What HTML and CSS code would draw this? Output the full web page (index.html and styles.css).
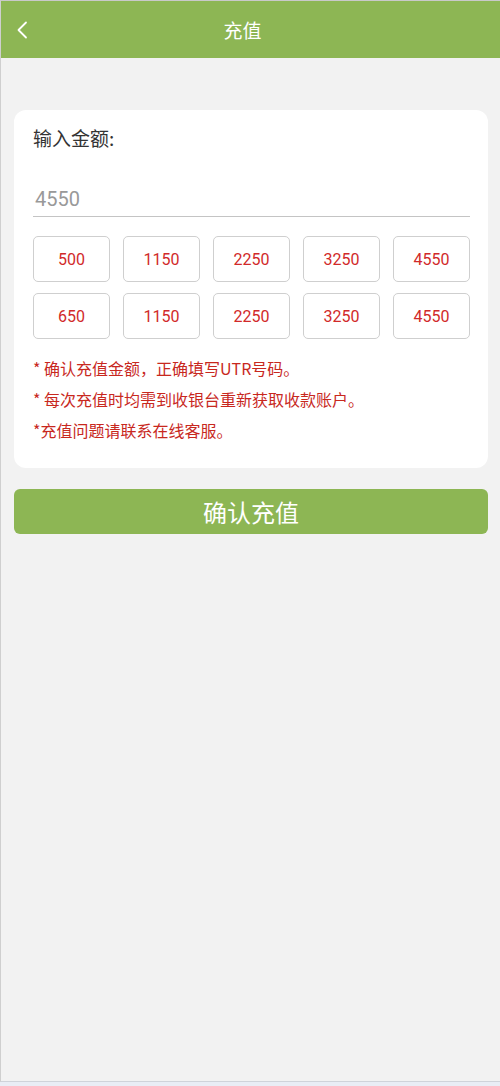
FILE: index.html
```html
<!DOCTYPE html>
<html lang="zh">
<head>
<meta charset="utf-8">
<title>充值</title>
<link rel="stylesheet" href="styles.css">
</head>
<body>
<div class="frame">
  <header class="topbar">
    <span class="back">
      <svg width="12" height="18" viewBox="0 0 12 18"><path d="M10 1.5 L2.5 9 L10 16.5" fill="none" stroke="#fff" stroke-width="1.8" stroke-linecap="round" stroke-linejoin="round"/></svg>
    </span>
    <h1 class="title">充值</h1>
  </header>
  <main class="content">
    <section class="card">
      <div class="label">输入金额:</div>
      <div class="amount-input">4550</div>
      <div class="grid">
        <div class="chip">500</div>
        <div class="chip">1150</div>
        <div class="chip">2250</div>
        <div class="chip">3250</div>
        <div class="chip">4550</div>
        <div class="chip">650</div>
        <div class="chip">1150</div>
        <div class="chip">2250</div>
        <div class="chip">3250</div>
        <div class="chip">4550</div>
      </div>
      <div class="notes">
        <p>* 确认充值金额，正确填写UTR号码。</p>
        <p>* 每次充值时均需到收银台重新获取收款账户。</p>
        <p>*充值问题请联系在线客服。</p>
      </div>
    </section>
    <button class="submit">确认充值</button>
  </main>
</div>
</body>
</html>
```
FILE: styles.css
```css
html, body {
  margin: 0;
  padding: 0;
}
body {
  background: #e9edf5;
  font-family: Roboto, "Noto Sans CJK SC", sans-serif;
  height: 1086px;
  overflow: hidden;
}
.frame {
  box-sizing: border-box;
  height: 1082px;
  border-top: 1px solid #c9c9c9;
  border-left: 1px solid #cfcfcf;
  border-bottom: 1px solid #cfd3da;
  background: #f2f2f2;
}
.topbar {
  height: 57px;
  background: #8db654;
  display: flex;
  align-items: center;
  position: relative;
  padding-right: 16px;
  justify-content: center;
}
.back {
  position: absolute;
  left: 15px;
  top: 20px;
  display: flex;
}
.title {
  margin: 0;
  color: #fff;
  font-size: 19px;
  font-weight: normal;
  font-family: "Noto Sans CJK SC", sans-serif;
}
.content {
  padding: 52px 12px 0 13px;
}
.card {
  background: #fff;
  border-radius: 12px;
  padding: 14px 18px 22px 19px;
}
.label {
  font-family: "Noto Sans CJK SC", sans-serif;
  font-size: 19px;
  color: #333;
  line-height: 28px;
}
.amount-input {
  margin-top: 32px;
  font-size: 20px;
  color: #999;
  line-height: 30px;
  padding-left: 2px;
  padding-bottom: 2px;
  border-bottom: 1px solid #c4c4c4;
}
.grid {
  margin-top: 19px;
  display: grid;
  grid-template-columns: repeat(5, 1fr);
  column-gap: 13px;
  row-gap: 11px;
}
.chip {
  height: 46px;
  box-sizing: border-box;
  border: 1px solid #cfcfcf;
  border-radius: 5px;
  display: flex;
  align-items: center;
  justify-content: center;
  color: #d12a2a;
  font-size: 16px;
}
.notes {
  margin-top: 14px;
  color: #c8281e;
  font-family: "Noto Sans CJK SC", sans-serif;
  font-size: 16px;
}
.notes p {
  margin: 0;
  line-height: 31px;
}
.submit {
  display: block;
  width: 100%;
  margin-top: 21px;
  height: 45px;
  border: none;
  border-radius: 6px;
  background: #8db654;
  color: #fff;
  font-family: "Noto Sans CJK SC", sans-serif;
  font-size: 24px;
  padding: 0;
}
```
